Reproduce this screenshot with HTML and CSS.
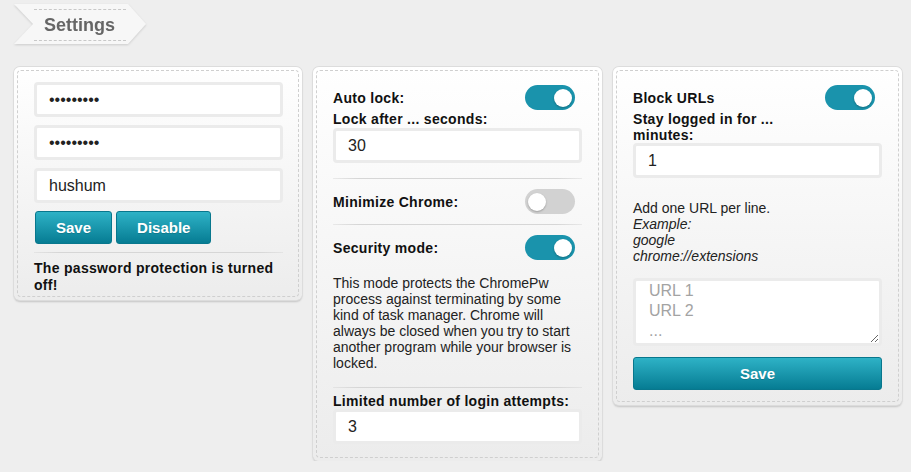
FILE: index.html
```html
<!DOCTYPE html>
<html>
<head>
<meta charset="utf-8">
<link rel="stylesheet" href="styles.css">
</head>
<body>
<div class="page">
  <div class="banner-wrap">
    <div class="banner"><div class="banner-inner">Settings</div></div>
  </div>
  <div class="cards">
    <div class="card card-pw">
      <input class="field" type="password" value="123456789">
      <input class="field" type="password" value="123456789">
      <input class="field" type="text" value="hushum">
      <div class="btns">
        <button class="btn">Save</button>
        <button class="btn">Disable</button>
      </div>
      <div class="sep sep-pw"></div>
      <p class="status">The password protection is turned off!</p>
    </div>

    <div class="card card-lock">
      <div class="row"><span class="label">Auto lock:</span><span class="toggle on"></span></div>
      <div class="label label-block">Lock after ... seconds:</div>
      <input class="field field-tight" type="text" value="30">
      <div class="sep sep-a"></div>
      <div class="row"><span class="label">Minimize Chrome:</span><span class="toggle"></span></div>
      <div class="sep sep-b"></div>
      <div class="row"><span class="label">Security mode:</span><span class="toggle on"></span></div>
      <p class="desc">This mode protects the ChromePw process against terminating by some kind of task manager. Chrome will always be closed when you try to start another program while your browser is locked.</p>
      <div class="sep sep-c"></div>
      <div class="label label-block label-last">Limited number of login attempts:</div>
      <input class="field" type="text" value="3">
    </div>

    <div class="card card-url">
      <div class="row"><span class="label">Block URLs</span><span class="toggle on"></span></div>
      <div class="label label-block label-narrow">Stay logged in for ... minutes:</div>
      <input class="field" type="text" value="1">
      <p class="desc desc-url">Add one URL per line.<br><i>Example:</i><br><i>google</i><br><i>chrome://extensions</i></p>
      <textarea class="urls" placeholder="URL 1&#10;URL 2&#10;..."></textarea>
      <button class="btn btn-wide">Save</button>
    </div>
  </div>
</div>
</body>
</html>
```
FILE: styles.css
```css
* { box-sizing: border-box; }
html, body {
  margin: 0;
  background: #eeeeee;
  font-family: "Liberation Sans", Arial, sans-serif;
  color: #111;
}
.page {
  padding: 4px 0 0 14px;
}
.banner-wrap {
  width: 132px;
  filter: drop-shadow(0 1px 1px rgba(0,0,0,0.14));
}
.banner {
  width: 132px;
  height: 40px;
  background: #f7f7f7;
  clip-path: polygon(0 0, 114px 0, 132px 20px, 114px 40px, 0 40px, 19px 20px);
  padding: 5px 0 0 20px;
}
.banner-inner {
  width: 92px;
  height: 32px;
  border-top: 1px dashed #c8c8c8;
  border-bottom: 1px dashed #c8c8c8;
  padding-left: 10px;
  display: flex;
  align-items: center;
  font-size: 18px;
  font-weight: bold;
  color: #666;
}
.cards {
  display: flex;
  align-items: flex-start;
  gap: 11px;
  margin-top: 23px;
}
.card {
  position: relative;
  width: 289px;
  padding: 15px 20px 16px 20px;
  border-radius: 6px;
  background: linear-gradient(#ffffff, #ececec);
  box-shadow: 0 0 0 1px #dcdcdc, 0 2px 2px rgba(0,0,0,0.18);
}
.card::before {
  content: "";
  position: absolute;
  inset: 3px;
  border: 1px dashed #cfcfcf;
  border-radius: 4px;
  pointer-events: none;
}
.card-pw { width: 288px; padding-right: 19px; padding-bottom: 6px; }
.card-lock { padding-bottom: 17px; }
.card-url { padding-bottom: 15px; }

.field {
  display: block;
  width: 100%;
  height: 35px;
  margin: 0 0 8px 0;
  border: 3px solid #ebebeb;
  border-radius: 4px;
  background: #fff;
  padding: 0 12px;
  font-family: "Liberation Sans", Arial, sans-serif;
  font-size: 16px;
  color: #222;
  outline: none;
}
.card-lock .field, .card-url .field { margin-bottom: 0; }

.btns {
  display: flex;
  gap: 4px;
  padding-left: 1px;
}
.btn {
  height: 33px;
  padding: 0 20px;
  border: 1px solid #08778d;
  border-radius: 3px;
  background: linear-gradient(#2eb2c6, #067c93);
  color: #fff;
  font-family: "Liberation Sans", Arial, sans-serif;
  font-size: 15px;
  font-weight: bold;
  text-shadow: 0 1px 0 rgba(0,0,0,0.15);
}
.btn-wide {
  display: block;
  width: 100%;
  margin-top: 11px;
}

.sep {
  height: 1px;
  background: linear-gradient(90deg, rgba(210,210,210,0.4), #d6d6d6 10%, #d6d6d6 90%, rgba(210,210,210,0.4));
}
.sep-pw { margin: 8px 0 7px; }
.sep-a { margin: 15px 0 10px; }
.sep-b { margin: 10px 0 10px; }
.sep-c { margin: 16px 0 6px; }

.status {
  margin: 0;
  font-size: 14px;
  font-weight: bold;
  letter-spacing: 0.3px;
  line-height: 17px;
  color: #111;
}

.row {
  display: flex;
  justify-content: space-between;
  align-items: center;
  height: 25px;
  margin-top: 3px;
}
.card-lock .sep + .row { margin-top: 0; }
.label {
  font-size: 14px;
  font-weight: bold;
  letter-spacing: 0.3px;
  color: #111;
}
.label-block {
  display: block;
  line-height: 16px;
  margin-top: 1px;
  margin-bottom: 1px;
}
.label-last {
  margin: 0;
  line-height: 15px;
}
.label-narrow {
  max-width: 180px;
  margin-bottom: 0;
}

.toggle {
  position: relative;
  width: 50px;
  height: 25px;
  border-radius: 13px;
  background: #d2d2d2;
  margin-right: 7px;
  flex: none;
}
.toggle::after {
  content: "";
  position: absolute;
  top: 3.5px;
  left: 3px;
  width: 18px;
  height: 18px;
  border-radius: 50%;
  background: #fff;
  box-shadow: 0 1px 2px rgba(0,0,0,0.25);
}
.toggle.on { background: #1a93ac; }
.toggle.on::after { left: auto; right: 3px; }

.desc {
  margin: 15px 0 0;
  font-size: 14px;
  line-height: 16px;
  color: #222;
}
.desc-url { margin-top: 22px; }

.urls {
  display: block;
  width: 100%;
  height: 68px;
  margin-top: 14px;
  border: 3px solid #ebebeb;
  border-radius: 4px;
  background: #fff;
  padding: 0 13px;
  font-family: "Liberation Sans", Arial, sans-serif;
  font-size: 16px;
  line-height: 20px;
  resize: vertical;
  outline: none;
  overflow: hidden;
}
.urls::placeholder { color: #a3a3a3; }
```
